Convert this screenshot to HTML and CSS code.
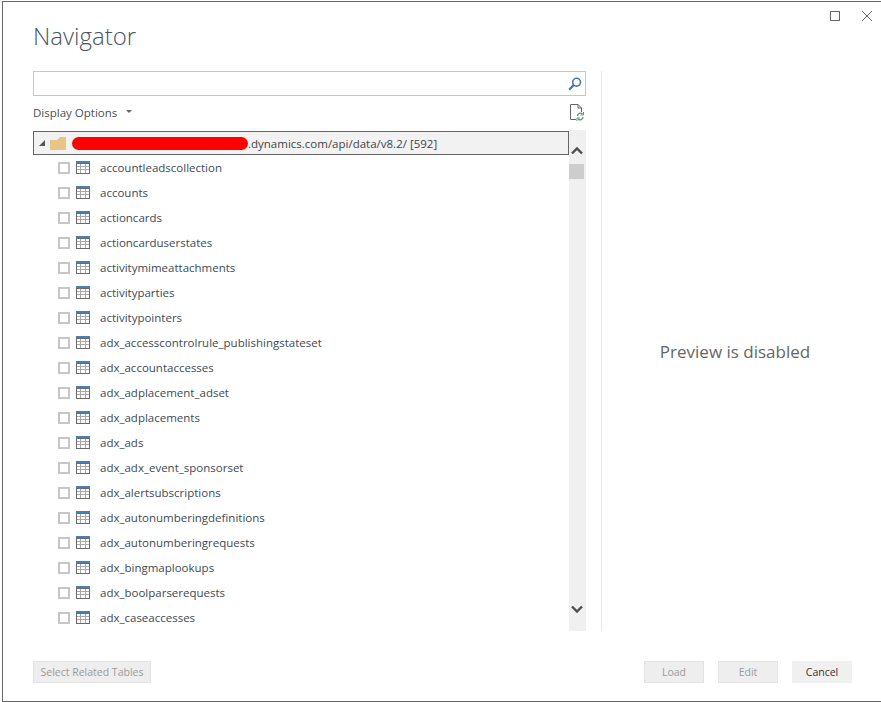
FILE: index.html
```html
<!DOCTYPE html>
<html lang="en">
<head>
<meta charset="utf-8">
<title>Navigator</title>
<link rel="stylesheet" href="styles.css">
</head>
<body>
<svg width="0" height="0" class="defs">
  <symbol id="tbl" viewBox="0 0 14 13">
    <rect x="0" y="0" width="14" height="3" fill="#4a7eb8"/>
    <rect x="0.5" y="2.5" width="13" height="10" fill="#fff" stroke="#6b6b6b"/>
    <path d="M4.5 3v9M9.5 3v9M1 5.5h12M1 8.5h12" stroke="#a8a8a8" fill="none"/>
  </symbol>
</svg>
<div class="window">
  <div class="winctl">
    <svg class="ctl-max" width="11" height="11" viewBox="0 0 11 11"><rect x="0.5" y="0.5" width="9" height="9" fill="none" stroke="#666"/></svg>
    <svg class="ctl-close" width="12" height="12" viewBox="0 0 12 12"><path d="M1 1l10 10M11 1L1 11" stroke="#666" fill="none"/></svg>
  </div>
  <h1 class="title">Navigator</h1>
  <div class="main">
    <div class="left">
      <div class="search">
        <svg width="14" height="14" viewBox="0 0 14 14"><circle cx="8.6" cy="5.2" r="3.9" fill="none" stroke="#3f78b5" stroke-width="1.6"/><path d="M5.8 8L1.2 12.6" stroke="#3f78b5" stroke-width="2.2" fill="none"/></svg>
      </div>
      <div class="options">
        <span class="opt-label">Display Options</span>
        <span class="caret"></span>
        <svg class="refresh" width="16" height="17" viewBox="0 0 16 17"><path d="M1.5 15.5V0.5H9L12.5 4V8M9 .5V4h3.5M1.5 15.5H7" fill="none" stroke="#666"/><path d="M8.5 12a3 3 0 0 1 5-2M14 13a3 3 0 0 1-5 2" fill="none" stroke="#4d9a78" stroke-width="1.3"/><path d="M14.5 8v3h-3M8 17v-3h3" fill="none" stroke="#4d9a78"/></svg>
      </div>
      <div class="treewrap">
        <div class="tree">
          <div class="root">
            <span class="tri"></span>
            <svg class="folder" width="16" height="13" viewBox="0 0 16 13"><path d="M0 3h7l3-3h6v13H0z" fill="#e8c583"/></svg>
            <span class="redact"></span>
            <span class="root-text">.dynamics.com/api/data/v8.2/ [592]</span>
          </div>
          <div class="rows">
            <div class="row"><span class="check"></span><svg class="ti"><use href="#tbl"/></svg><span>accountleadscollection</span></div>
            <div class="row"><span class="check"></span><svg class="ti"><use href="#tbl"/></svg><span>accounts</span></div>
            <div class="row"><span class="check"></span><svg class="ti"><use href="#tbl"/></svg><span>actioncards</span></div>
            <div class="row"><span class="check"></span><svg class="ti"><use href="#tbl"/></svg><span>actioncarduserstates</span></div>
            <div class="row"><span class="check"></span><svg class="ti"><use href="#tbl"/></svg><span>activitymimeattachments</span></div>
            <div class="row"><span class="check"></span><svg class="ti"><use href="#tbl"/></svg><span>activityparties</span></div>
            <div class="row"><span class="check"></span><svg class="ti"><use href="#tbl"/></svg><span>activitypointers</span></div>
            <div class="row"><span class="check"></span><svg class="ti"><use href="#tbl"/></svg><span>adx_accesscontrolrule_publishingstateset</span></div>
            <div class="row"><span class="check"></span><svg class="ti"><use href="#tbl"/></svg><span>adx_accountaccesses</span></div>
            <div class="row"><span class="check"></span><svg class="ti"><use href="#tbl"/></svg><span>adx_adplacement_adset</span></div>
            <div class="row"><span class="check"></span><svg class="ti"><use href="#tbl"/></svg><span>adx_adplacements</span></div>
            <div class="row"><span class="check"></span><svg class="ti"><use href="#tbl"/></svg><span>adx_ads</span></div>
            <div class="row"><span class="check"></span><svg class="ti"><use href="#tbl"/></svg><span>adx_adx_event_sponsorset</span></div>
            <div class="row"><span class="check"></span><svg class="ti"><use href="#tbl"/></svg><span>adx_alertsubscriptions</span></div>
            <div class="row"><span class="check"></span><svg class="ti"><use href="#tbl"/></svg><span>adx_autonumberingdefinitions</span></div>
            <div class="row"><span class="check"></span><svg class="ti"><use href="#tbl"/></svg><span>adx_autonumberingrequests</span></div>
            <div class="row"><span class="check"></span><svg class="ti"><use href="#tbl"/></svg><span>adx_bingmaplookups</span></div>
            <div class="row"><span class="check"></span><svg class="ti"><use href="#tbl"/></svg><span>adx_boolparserequests</span></div>
            <div class="row"><span class="check"></span><svg class="ti"><use href="#tbl"/></svg><span>adx_caseaccesses</span></div>
          </div>
        </div>
        <div class="scrollbar">
          <svg class="arrow" width="16" height="16" viewBox="0 0 16 16"><path d="M3 10.5L8 5.5l5 5" fill="none" stroke="#505050" stroke-width="2.4"/></svg>
          <div class="thumb"></div>
          <div class="track"></div>
          <svg class="arrow" width="16" height="16" viewBox="0 0 16 16"><path d="M3 5.5l5 5 5-5" fill="none" stroke="#505050" stroke-width="2.4"/></svg>
        </div>
      </div>
    </div>
    <div class="preview">Preview is disabled</div>
  </div>
  <div class="footer">
    <button class="btn btn-wide" disabled>Select Related Tables</button>
    <div class="actions">
      <button class="btn" disabled>Load</button>
      <button class="btn" disabled>Edit</button>
      <button class="btn btn-active">Cancel</button>
    </div>
  </div>
</div>
</body>
</html>
```

FILE: styles.css
```css
* { box-sizing: border-box; }
html, body { margin: 0; height: 100%; background: #fff; }
body {
  padding: 1px 0 0 2px;
  height: 702px;
  overflow: hidden;
  font-family: "Open Sans", "Noto Sans", sans-serif;
  font-size: 11.5px;
  color: #3d4a57;
}
.defs { position: absolute; }
.window {
  position: relative;
  height: 701px;
  border-top: 1px solid #666;
  border-left: 1px solid #666;
  border-bottom: 1px solid #666;
  display: flex;
  flex-direction: column;
  padding: 0 0 0 30px;
}
.winctl {
  position: absolute;
  top: 8px;
  right: 0;
  display: flex;
  align-items: center;
}
.ctl-max { margin-right: 20px; }
.ctl-close { margin-right: 8px; }
.title {
  margin: 0;
  height: 69px;
  padding-top: 17px;
  font-size: 24px;
  line-height: 33px;
  font-weight: 300;
  font-family: "Open Sans", sans-serif;
  color: #4b5661;
}
.main { display: flex; height: 560px; }
.left { width: 553px; display: flex; flex-direction: column; }
.search {
  height: 25px;
  border: 1px solid #c6c6c6;
  display: flex;
  align-items: center;
  justify-content: flex-end;
  padding-right: 3px;
}
.options {
  height: 34px;
  display: flex;
  align-items: center;
  padding-bottom: 2px;
}
.opt-label { font-size: 11.5px; color: #4a4f55; }
.caret {
  margin-left: 9px;
  margin-bottom: 2px;
  border-left: 3px solid transparent;
  border-right: 3px solid transparent;
  border-top: 3px solid #666;
}
.refresh { margin-left: auto; margin-right: 1px; margin-top: 1px; }
.treewrap { display: flex; height: 501px; overflow: hidden; }
.tree { width: 537px; padding-top: 1px; }
.root {
  width: 536px;
  height: 24px;
  border: 1px solid #666;
  background: #f2f2f2;
  display: flex;
  align-items: center;
  padding-left: 5px;
  color: #444;
}
.tri {
  width: 0;
  height: 0;
  border-bottom: 6px solid #555;
  border-left: 6px solid transparent;
  margin-right: 5px;
}
.folder { margin-right: 6px; }
.redact {
  width: 176px;
  height: 13px;
  border-radius: 7px;
  background: #f00;
}
.root-text { white-space: nowrap; }
.rows { height: 476px; overflow: hidden; }
.row {
  height: 25px;
  display: flex;
  align-items: center;
  padding-left: 25px;
  white-space: nowrap;
}
.check {
  width: 12px;
  height: 12px;
  border: 2px solid #c6c6c6;
  background: #fff;
  margin-right: 6px;
}
.ti { width: 14px; height: 13px; margin-right: 10px; }
.scrollbar {
  width: 17px;
  background: #f0f0f0;
  display: flex;
  flex-direction: column;
}
.arrow { display: block; flex: none; margin-top: 13px; }
.scrollbar .arrow:last-child { margin-top: 0; margin-bottom: 14px; }
.thumb { height: 15px; width: 15px; margin-top: 5px; background: #cdcdcd; flex: none; }
.track { flex: 1; }
.preview {
  margin-left: 15px;
  flex: 1;
  border-left: 1px solid #e6e6e6;
  display: flex;
  align-items: center;
  justify-content: center;
  padding-right: 13px;
  font-size: 17px;
  color: #666;
}
.footer {
  display: flex;
  justify-content: space-between;
  padding: 30px 29px 0 0;
}
.actions { display: flex; gap: 14px; }
.btn {
  width: 60px;
  height: 22px;
  padding: 0;
  border: 1px solid #e3e3e3;
  background: #eee;
  font-family: inherit;
  font-size: 10.5px;
  color: #9a9a9a;
}
.btn-wide { width: 118px; }
.btn-active { border-color: #f0f0f0; background: #f0f0f0; color: #333; }
```
